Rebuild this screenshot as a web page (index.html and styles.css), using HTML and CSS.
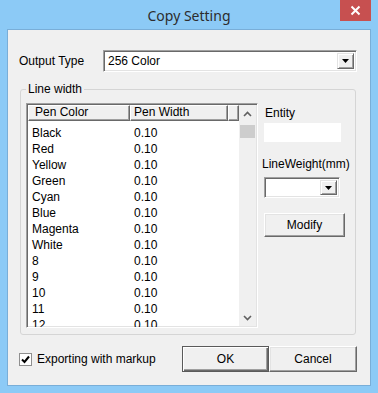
FILE: index.html
```html
<!DOCTYPE html>
<html>
<head>
<meta charset="utf-8">
<link rel="stylesheet" href="styles.css">
</head>
<body>
<div class="window">
  <div class="titlebar">
    <span></span>
    <div class="title">Copy Setting</div>
    <div class="close">
      <svg width="31" height="21" viewBox="0 0 31 21"><path d="M11.5 6.5 L19.5 14.5 M19.5 6.5 L11.5 14.5" stroke="#fff" stroke-width="2" fill="none"/></svg>
    </div>
  </div>
  <div class="client">
    <div class="row-output">
      <span class="lbl-output">Output Type</span>
      <div class="combo combo-output">
        <span class="combo-text">256 Color</span>
        <span class="drop-btn"><svg width="7" height="4" viewBox="0 0 7 4"><path d="M0 0 H7 L3.5 4 Z" fill="#000"/></svg></span>
      </div>
    </div>
    <fieldset class="group">
      <legend>Line width</legend>
      <div class="group-body">
        <div class="list">
          <div class="list-main">
            <div class="list-head">
              <div class="hcell hc1">Pen Color</div>
              <div class="hcell hc2">Pen Width</div>
              <div class="hcell hc3"></div>
            </div>
            <div class="list-rows">
              <div class="lrow"><span class="c1">Black</span><span class="c2">0.10</span></div>
              <div class="lrow"><span class="c1">Red</span><span class="c2">0.10</span></div>
              <div class="lrow"><span class="c1">Yellow</span><span class="c2">0.10</span></div>
              <div class="lrow"><span class="c1">Green</span><span class="c2">0.10</span></div>
              <div class="lrow"><span class="c1">Cyan</span><span class="c2">0.10</span></div>
              <div class="lrow"><span class="c1">Blue</span><span class="c2">0.10</span></div>
              <div class="lrow"><span class="c1">Magenta</span><span class="c2">0.10</span></div>
              <div class="lrow"><span class="c1">White</span><span class="c2">0.10</span></div>
              <div class="lrow"><span class="c1">8</span><span class="c2">0.10</span></div>
              <div class="lrow"><span class="c1">9</span><span class="c2">0.10</span></div>
              <div class="lrow"><span class="c1">10</span><span class="c2">0.10</span></div>
              <div class="lrow"><span class="c1">11</span><span class="c2">0.10</span></div>
              <div class="lrow"><span class="c1">12</span><span class="c2">0.10</span></div>
            </div>
          </div>
          <div class="vscroll">
            <div class="sb-arrow"><svg width="9" height="6" viewBox="0 0 9 6"><path d="M1 5 L4.5 1.5 L8 5" stroke="#606060" stroke-width="1.6" fill="none"/></svg></div>
            <div class="sb-thumb"></div>
            <div class="sb-track"></div>
            <div class="sb-arrow"><svg width="9" height="6" viewBox="0 0 9 6"><path d="M1 1 L4.5 4.5 L8 1" stroke="#606060" stroke-width="1.6" fill="none"/></svg></div>
          </div>
        </div>
        <div class="side">
          <div class="lbl-entity">Entity</div>
          <div class="entity-box"></div>
          <div class="lbl-lw">LineWeight(mm)</div>
          <div class="combo combo-lw">
            <span class="combo-text"></span>
            <span class="drop-btn"><svg width="7" height="4" viewBox="0 0 7 4"><path d="M0 0 H7 L3.5 4 Z" fill="#000"/></svg></span>
          </div>
          <button class="btn btn-modify">Modify</button>
        </div>
      </div>
    </fieldset>
    <div class="bottom">
      <div class="check">
        <span class="box"><svg width="11" height="11" viewBox="0 0 11 11"><path d="M2 5.5 L4.5 8 L9 2.5" stroke="#000" stroke-width="2" fill="none"/></svg></span>
        <span class="check-text">Exporting with markup</span>
      </div>
      <div class="buttons">
        <button class="btn btn-default btn-ok">OK</button>
        <button class="btn btn-cancel">Cancel</button>
      </div>
    </div>
  </div>
</div>
</body>
</html>
```
FILE: styles.css
```css
* { box-sizing: border-box; }
html, body { margin: 0; padding: 0; }
body {
  width: 378px;
  height: 393px;
  overflow: hidden;
  font-family: "Liberation Sans", Arial, sans-serif;
  font-size: 12px;
  color: #000;
}
.window {
  width: 378px;
  height: 393px;
  background: #8ccaf6;
  padding: 0 7px 7px 7px;
  display: flex;
  flex-direction: column;
}
.titlebar {
  height: 29px;
  flex: none;
  display: grid;
  grid-template-columns: 1fr auto 1fr;
  align-items: start;
}
.title {
  font-family: "Noto Sans", "Open Sans", sans-serif;
  font-size: 14px;
  line-height: 30px;
  padding-top: 1px;
  color: #2d2d2d;
  white-space: nowrap;
}
.close {
  justify-self: end;
  width: 31px;
  height: 21px;
  background: #c75050;
  display: flex;
}
.client {
  flex: 1;
  background: #f0f0f0;
  border: 1px solid #79aed8;
  padding: 0 13px 0 11px;
  display: flex;
  flex-direction: column;
}
.row-output {
  margin-top: 20px;
  height: 22px;
  display: flex;
  align-items: center;
}
.lbl-output {
  width: 84px;
  flex: none;
}
.combo {
  background: #fff;
  border: 1px solid;
  border-color: #a0a0a0 #fff #fff #a0a0a0;
  box-shadow: inset 1px 1px 0 #696969, inset -1px -1px 0 #e3e3e3;
  padding: 2px;
  display: flex;
  align-items: stretch;
}
.combo-output {
  flex: 1;
  height: 22px;
}
.combo-text {
  flex: 1;
  padding-left: 2px;
  line-height: 16px;
}
.drop-btn {
  width: 17px;
  flex: none;
  background: #f0f0f0;
  border: 1px solid;
  border-color: #e3e3e3 #696969 #696969 #e3e3e3;
  box-shadow: inset 1px 1px 0 #fff, inset -1px -1px 0 #a0a0a0;
  display: flex;
  align-items: center;
  justify-content: center;
}
.group {
  margin: 10px 1px 0 1px;
  border: 1px solid #d5d5d5;
  border-radius: 3px;
  padding: 7px 5px 6px 5px;
  min-width: 0;
}
.group legend {
  padding: 0 2px;
  line-height: 14px;
  font-size: 12px;
}
.group-body {
  display: flex;
  gap: 4px;
}
.list {
  width: 232px;
  height: 225px;
  flex: none;
  background: #fff;
  border: 1px solid;
  border-color: #a0a0a0 #fff #fff #a0a0a0;
  box-shadow: inset 1px 1px 0 #696969, inset -1px -1px 0 #e3e3e3;
  padding: 1px;
  display: flex;
  overflow: hidden;
}
.list-main {
  flex: 1;
  min-width: 0;
}
.list-head {
  display: flex;
  height: 16px;
}
.hcell {
  background: #f0f0f0;
  border: 1px solid;
  border-color: #fff #696969 #696969 #fff;
  box-shadow: inset -1px -1px 0 #a0a0a0;
  padding-left: 6px;
  line-height: 13px;
  white-space: nowrap;
  overflow: hidden;
}
.hc1 { width: 102px; }
.hc2 { width: 98px; padding-left: 3px; }
.hc3 { flex: 1; }
.list-rows {
  padding-top: 4px;
}
.lrow {
  display: flex;
  height: 16px;
  line-height: 16px;
}
.c1 { width: 102px; padding-left: 4px; }
.c2 { padding-left: 4px; }
.vscroll {
  width: 17px;
  flex: none;
  background: #f0f0f0;
  display: flex;
  flex-direction: column;
}
.sb-arrow {
  height: 17px;
  display: flex;
  align-items: center;
  justify-content: center;
}
.sb-thumb {
  height: 13px;
  margin: 3px 1px 0 1px;
  background: #cdcdcd;
}
.sb-track { flex: 1; }
.side {
  flex: 1;
  min-width: 0;
  display: flex;
  flex-direction: column;
  align-items: flex-start;
}
.lbl-entity {
  margin-top: 3px;
  line-height: 14px;
  padding-left: 3px;
}
.entity-box {
  margin-top: 3px;
  margin-left: 2px;
  width: 77px;
  height: 19px;
  background: #fff;
}
.lbl-lw {
  margin-top: 15px;
  line-height: 14px;
  white-space: nowrap;
}
.combo-lw {
  margin-top: 6px;
  margin-left: 2px;
  width: 76px;
  height: 21px;
}
.btn {
  font-family: "Liberation Sans", Arial, sans-serif;
  font-size: 12px;
  color: #000;
  background: #f0f0f0;
  border: 1px solid;
  border-color: #fff #696969 #696969 #fff;
  box-shadow: inset -1px -1px 0 #a0a0a0, inset 1px 1px 0 #e3e3e3;
  padding: 0;
  margin: 0;
}
.btn-modify {
  margin-top: 15px;
  margin-left: 2px;
  width: 81px;
  height: 24px;
}
.bottom {
  margin-top: 11px;
  height: 26px;
  display: flex;
  align-items: center;
}
.check {
  display: flex;
  align-items: center;
  gap: 5px;
}
.box {
  width: 13px;
  height: 13px;
  background: #fff;
  border: 1px solid #8f8f8f;
  display: flex;
  align-items: center;
  justify-content: center;
}
.buttons {
  margin-left: auto;
  display: flex;
}
.btn-ok { width: 87px; height: 26px; }
.btn-cancel { width: 88px; height: 26px; }
.btn-default {
  border: 1px solid #5a5a5a;
  box-shadow: inset 1px 1px 0 #fff, inset -1px -1px 0 #696969, inset -2px -2px 0 #a0a0a0;
}
```
